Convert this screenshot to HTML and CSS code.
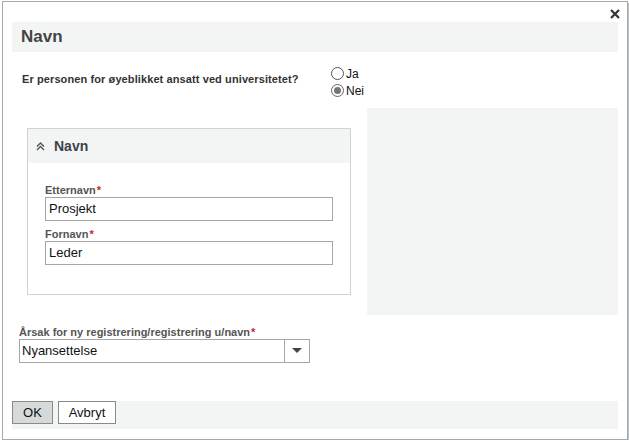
FILE: index.html
```html
<!DOCTYPE html>
<html lang="no">
<head>
<meta charset="utf-8">
<title>Navn</title>
<link rel="stylesheet" href="styles.css">
</head>
<body>
<div class="dialog">
  <button class="close" aria-label="Lukk">
    <svg width="10" height="10" viewBox="0 0 10 10"><path d="M1 1L9 9M9 1L1 9" stroke="#333" stroke-width="2.2" fill="none"/></svg>
  </button>
  <div class="titlebar">Navn</div>
  <div class="question-row">
    <div class="question">Er personen for øyeblikket ansatt ved universitetet?</div>
    <div class="radios">
      <label class="radio"><span class="circle"></span>Ja</label>
      <label class="radio"><span class="circle checked"></span>Nei</label>
    </div>
  </div>
  <div class="columns">
    <div class="panel">
      <div class="panel-head">
        <svg class="chev" width="9" height="9" viewBox="0 0 9 9"><path d="M1 4.5L4.5 1L8 4.5M1 8L4.5 4.5L8 8" stroke="#555" stroke-width="1.4" fill="none"/></svg>
        <span>Navn</span>
      </div>
      <div class="panel-body">
        <div class="field">
          <div class="label">Etternavn<span class="req">*</span></div>
          <div class="input">Prosjekt</div>
        </div>
        <div class="field">
          <div class="label">Fornavn<span class="req">*</span></div>
          <div class="input">Leder</div>
        </div>
      </div>
    </div>
    <div class="side"></div>
  </div>
  <div class="reason">
    <div class="label">Årsak for ny registrering/registrering u/navn<span class="req">*</span></div>
    <div class="select">
      <div class="select-value">Nyansettelse</div>
      <div class="select-btn"><svg width="10" height="6" viewBox="0 0 10 6"><path d="M0 0H10L5 5Z" fill="#444"/></svg></div>
    </div>
  </div>
  <div class="footer">
    <button class="btn primary">OK</button>
    <button class="btn">Avbryt</button>
  </div>
</div>
</body>
</html>
```
FILE: styles.css
```css
* { box-sizing: border-box; }
html, body { margin: 0; padding: 0; background: #fff; }
body { font-family: "Liberation Sans", Arial, sans-serif; color: #222; }

.dialog {
  position: relative;
  margin: 1px 0 0 2px;
  width: 626px;
  height: 439px;
  border: 1px solid #a8a8a8;
  box-shadow: 2px 2px 1px rgba(100,110,120,0.45);
  padding: 20px 9px 0 9px;
  display: flex;
  flex-direction: column;
}

.close {
  position: absolute;
  top: 7px;
  right: 7px;
  border: 0;
  background: none;
  padding: 0;
  width: 10px;
  height: 10px;
  display: flex;
}

.titlebar {
  height: 30px;
  background: #f3f5f5;
  padding-left: 9px;
  font-size: 17px;
  font-weight: bold;
  color: #444;
  line-height: 30px;
}

.question-row {
  display: flex;
  margin-top: 13px;
  padding-left: 10px;
}
.question {
  width: 309px;
  font-size: 11px;
  font-weight: bold;
  color: #333;
  padding-top: 8px;
  letter-spacing: 0.1px;
}
.radios {
  display: flex;
  flex-direction: column;
}
.radio {
  display: flex;
  align-items: center;
  font-size: 12px;
  color: #111;
  height: 17px;
}
.circle {
  width: 13px;
  height: 13px;
  border: 1px solid #555;
  border-radius: 50%;
  margin-right: 2px;
  background: #fff;
  position: relative;
}
.circle.checked { border-color: #666; }
.circle.checked::after {
  content: "";
  position: absolute;
  left: 2px; top: 2px;
  width: 7px; height: 7px;
  border-radius: 50%;
  background: #777;
}

.columns {
  display: flex;
  margin-top: 9px;
  padding-left: 15px;
  gap: 16px;
}
.panel {
  width: 324px;
  height: 167px;
  margin-top: 20px;
  border: 1px solid #d0d3d3;
  display: flex;
  flex-direction: column;
}
.panel-head {
  height: 34px;
  background: #f3f5f5;
  display: flex;
  align-items: center;
  padding-left: 8px;
  font-size: 14px;
  font-weight: bold;
  color: #3d4247;
}
.chev { margin-right: 9px; }
.panel-body {
  padding: 20px 0 0 17px;
  display: flex;
  flex-direction: column;
  gap: 6px;
}
.label {
  font-size: 11px;
  font-weight: bold;
  color: #555;
  height: 14px;
  line-height: 14px;
}
.req { color: #c0262d; margin-left: 1px; }
.input {
  width: 288px;
  height: 24px;
  border: 1px solid #a6a6a6;
  font-size: 13px;
  color: #111;
  padding-left: 3px;
  line-height: 22px;
}
.side {
  width: 251px;
  height: 207px;
  background: #f3f5f5;
}

.reason {
  margin-top: 10px;
  padding-left: 7px;
}
.select {
  display: flex;
  width: 291px;
  height: 24px;
  border: 1px solid #a6a6a6;
}
.select-value {
  flex: 1;
  font-size: 13px;
  line-height: 22px;
  padding-left: 2px;
  color: #111;
}
.select-btn {
  width: 25px;
  border-left: 1px solid #a6a6a6;
  display: flex;
  align-items: center;
  justify-content: center;
}

.footer {
  margin-top: 38px;
  height: 28px;
  background: #f3f5f5;
  display: flex;
  align-items: flex-start;
  gap: 5px;
}
.btn {
  height: 23px;
  border: 1px solid #8a8a8a;
  background: #fff;
  font-family: "Liberation Sans", Arial, sans-serif;
  font-size: 13px;
  color: #111;
  padding: 0;
  width: 58px;
}
.btn.primary {
  width: 41px;
  background: #d5d9da;
}
```
